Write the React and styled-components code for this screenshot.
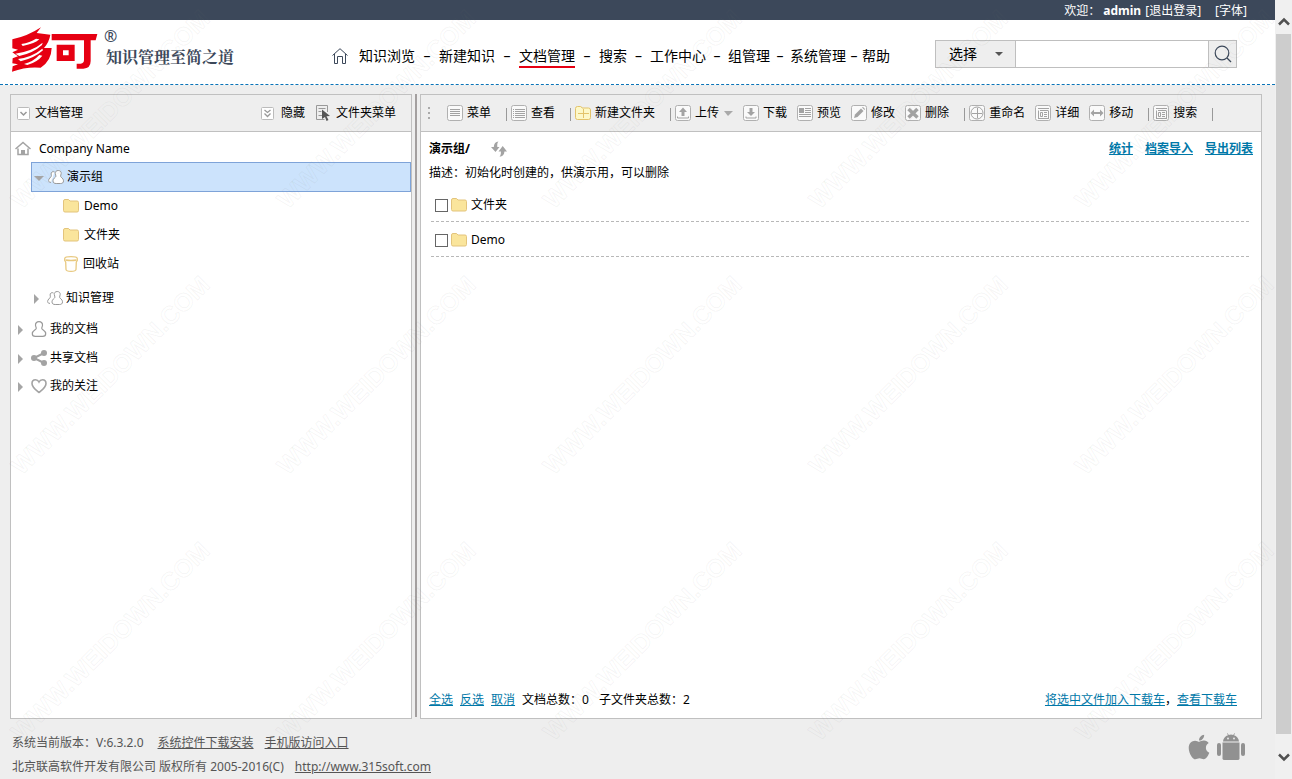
import React from "react";
import styled, { createGlobalStyle, css } from "styled-components";
import { FaApple } from "react-icons/fa";

const GlobalStyle = createGlobalStyle`
  *, *::before, *::after { box-sizing: border-box; }
  body {
    margin: 0;
    background: #eee;
    color: #000;
    font-family: "Noto Sans", "Noto Sans CJK SC", sans-serif;
    font-size: 12px;
    line-height: 20px;
  }
  button, input, select { font: inherit; color: inherit; }
`;

const Page = styled.div`
  position: relative;
  display: flex;
  min-height: 100vh;
`;

const Main = styled.div`
  flex: 1;
  min-width: 0;
  display: flex;
  flex-direction: column;
`;

const TopBar = styled.div`
  display: flex;
  justify-content: flex-end;
  height: 20px;
  padding-right: 28px;
  background: #3c485a;
  color: #fff;
  line-height: 22px;
  white-space: pre;
`;

const TopLink = styled.a`
  color: #fff;
  text-decoration: none;
  margin-left: ${(p) => (p.$gap ? 14 : 4)}px;
`;

const Header = styled.header`
  display: flex;
  align-items: flex-start;
  height: 65px;
  padding-left: 12px;
  padding-right: 38px;
  background: #fff;
  border-bottom: 1px dashed #0a74b8;
`;

const Brand = styled.div`
  display: flex;
  flex: 0 0 320px;
  padding-top: 7px;
  color: #3c485a;
`;

const Registered = styled.span`
  margin-left: 5px;
  width: 12px;
  font-size: 16px;
  line-height: 18px;
`;

const Slogan = styled.span`
  margin-left: -10px;
  padding-top: 20px;
  font-family: "Noto Serif CJK SC", "Noto Sans CJK SC", serif;
  font-size: 16px;
  font-weight: 700;
  white-space: nowrap;
`;

const Nav = styled.nav`
  display: flex;
  align-items: center;
  height: 32px;
  margin-top: 20px;
  font-size: 14px;
  white-space: nowrap;
`;

const NavHome = styled.a`
  display: flex;
  margin-right: 11px;
`;

const NavLink = styled.a`
  color: #000;
  text-decoration: none;
  line-height: 20px;
  padding-top: 1px;
  border-bottom: 2px solid ${(p) => (p.$active ? "#e60012" : "transparent")};
`;

const NavDash = styled.span`
  width: ${(p) => p.$width}px;
  text-align: center;
`;

const Search = styled.form`
  display: flex;
  width: 302px;
  height: 28px;
  margin: 20px 0 0 auto;
  border: 1px solid #bfbfbf;
  background: #eee;
`;

const SelectWrap = styled.div`
  display: flex;
  align-items: center;
  width: 80px;
  padding-right: 12px;
  border-right: 1px solid #bfbfbf;
`;

const SearchSelect = styled.select`
  appearance: none;
  flex: 1;
  min-width: 0;
  padding: 0 0 0 13px;
  border: 0;
  background: transparent;
  font-size: 14px;
`;

const SearchInput = styled.input`
  flex: 1;
  min-width: 0;
  border: 0;
  border-right: 1px solid #bfbfbf;
  background: #fff;
`;

const SearchButton = styled.button`
  display: flex;
  align-items: center;
  justify-content: center;
  width: 27px;
  padding: 0;
  border: 0;
  background: transparent;
`;

const Workspace = styled.div`
  flex: 1;
  display: flex;
  padding: 9px 13px 0 10px;
`;

const Panel = styled.section`
  display: flex;
  flex-direction: column;
  border: 1px solid #c0c0c0;
  background: #fff;
  ${(p) => (p.$side ? css`flex: 0 0 402px;` : css`flex: 1; min-width: 0;`)}
`;

const Splitter = styled.div`
  width: 2px;
  margin: 0 3px 2px;
  background: #a39f9f;
`;

const PanelBar = styled.div`
  display: flex;
  align-items: center;
  height: 37px;
  padding: 0 15px 0 ${(p) => (p.$tools ? 7 : 6)}px;
  border-bottom: 1px solid #c0c0c0;
  background: #eee;
  white-space: nowrap;
`;

const BarButton = styled.button`
  display: flex;
  align-items: center;
  gap: ${(p) => p.$gap || 4}px;
  margin: 0 ${(p) => p.$after || 0}px 0 0;
  padding: 0;
  border: 0;
  background: transparent;
  line-height: 18px;
`;

const BarText = styled.span``;

const BarSpacer = styled.div`
  flex: 1;
`;

const BarDivider = styled.span`
  width: 1px;
  height: 13px;
  margin: 2px 4px 0 5px;
  background: #999;
`;

const Grip = styled.span`
  width: 2px;
  height: 12px;
  margin-right: 17px;
  background: repeating-linear-gradient(#aaa 0 2px, transparent 2px 5px);
`;

const Caret = styled.span`
  width: 0;
  height: 0;
  margin: 0 10px 0 5px;
  border: 5px solid transparent;
  border-top-color: #a9a9a9;
  border-bottom: 0;
  border-left-width: 4px;
`;

const SelectCaret = styled.span`
  border: 4px solid transparent;
  border-top-color: #555;
  border-bottom: 0;
`;

const Tree = styled.ul`
  margin: 0;
  padding: 3px 0 0;
  list-style: none;
`;

const TreeRow = styled.li`
  display: flex;
  align-items: center;
  height: ${(p) => p.$height}px;
  margin-top: ${(p) => p.$before || 0}px;
  margin-left: ${(p) => p.$indent}px;
  ${(p) =>
    p.$selected &&
    css`
      border: 1px solid #7ea3d8;
      background: #cce3fc;
    `}
`;

const TreeLabel = styled.a`
  display: flex;
  align-items: center;
  gap: ${(p) => p.$gap}px;
  color: #000;
  text-decoration: none;
`;

const Toggle = styled.span`
  flex: none;
  border: 5px solid transparent;
  ${(p) =>
    p.$open
      ? css`
          margin: 2px 4px 0 2px;
          border-top-color: #a5a5a5;
          border-bottom: 0;
        `
      : css`
          margin: 2px 8px 0 0;
          border-left-color: #a5a5a5;
          border-right: 0;
        `}
`;

const TitleRow = styled.div`
  display: flex;
  align-items: center;
  height: 33px;
  padding: 0 8px;
  font-weight: 700;
`;

const Title = styled.h1`
  margin: 0 21px 0 0;
  font-size: 12px;
`;

const IconButton = styled.button`
  display: flex;
  padding: 0;
  border: 0;
  background: transparent;
`;

const LinkGroup = styled.div`
  display: flex;
  gap: ${(p) => p.$gap}px;
  margin-left: auto;
`;

const TextLink = styled.a`
  color: #0078a8;
  text-decoration: underline;
`;

const Description = styled.p`
  margin: 0;
  padding: 0 8px;
  line-height: 16px;
`;

const FileList = styled.ul`
  margin: 6px 12px 0 10px;
  padding: 0;
  list-style: none;
`;

const FileRow = styled.li`
  display: flex;
  align-items: center;
  height: 35px;
  padding: 2px 0 0 4px;
  border-bottom: 1px dashed #b8b8b8;
`;

const FileCheck = styled.input`
  appearance: none;
  width: 13px;
  height: 13px;
  margin: 0 3px 0 0;
  border: 1px solid #666;
  background: #fff;
`;

const FileLabel = styled.label`
  display: flex;
  align-items: center;
  gap: 4px;
`;

const ListFooter = styled.div`
  display: flex;
  align-items: center;
  gap: 7px;
  margin-top: auto;
  padding: 0 24px 8px 8px;
`;

const Count = styled.span`
  margin-right: 3px;
`;

const Footer = styled.footer`
  display: flex;
  align-items: flex-start;
  justify-content: space-between;
  height: 60px;
  padding: 12px 30px 0 12px;
  line-height: 24px;
  color: #555;
`;

const FooterLine = styled.div`
  display: flex;
  gap: 11px;
`;

const FooterLink = styled.a`
  color: #555;
  text-decoration: underline;
  margin-left: ${(p) => p.$lead || 0}px;
`;

const Stores = styled.div`
  display: flex;
  gap: 4px;
  align-items: center;
  padding-top: 2px;
  color: #919191;
`;

const ScrollTrack = styled.div`
  position: relative;
  display: flex;
  flex-direction: column;
  align-items: center;
  width: 17px;
  padding: 16px 0;
  background: #f0f0f0;
`;

const ScrollThumb = styled.div`
  flex: 1;
  width: 15px;
  margin: 6px 0 17px;
  background: #cdcdcd;
`;

const Watermark = styled.div`
  position: absolute;
  inset: 0;
  overflow: hidden;
  pointer-events: none;
`;

const WatermarkGrid = styled.div`
  display: grid;
  grid-template-columns: repeat(auto-fill, 266px);
  grid-auto-rows: 266px;
  margin: -24px -140px 0 -23px;
`;

const WatermarkCell = styled.span`
  display: flex;
  align-items: center;
  justify-content: center;
  font: 700 25px/30px "Liberation Sans", sans-serif;
  color: rgba(128, 128, 128, 0.02);
  -webkit-text-stroke: 1px rgba(120, 120, 120, 0.07);
  transform: rotate(-45deg);
`;

const Svg = ({ w = 16, h = 16, children, ...rest }) => (
  <svg width={w} height={h} viewBox={`0 0 ${w} ${h}`} fill="none" aria-hidden="true" {...rest}>
    {children}
  </svg>
);

const Framed = ({ children }) => (
  <Svg>
    <rect x=".5" y=".5" width="15" height="15" rx="2" fill="#fafafa" stroke="#b0b0b0" />
    {children}
  </Svg>
);

const G = "#a3a3a3";

const icons = {
  menu: (
    <Framed>
      <path d="M3 4.500h10M3 6.500h10M3 8.500h10M3 10.500h10" stroke={G} />
    </Framed>
  ),
  view: (
    <Framed>
      <path d="M2 4.500h1M4 4.500h10M2 6.500h1M4 6.500h10M2 8.500h1M4 8.500h10M2 10.500h1M4 10.500h10M2 12.500h1M4 12.500h10" stroke={G} />
    </Framed>
  ),
  newFolder: (
    <Svg>
      <path d="M.5 3.500q0-2 2-2h3q1 0 1.500 1.500h6.500q2 0 2 2v7.500q0 2-2 2h-11q-2 0-2-2z" fill="#fdf8c8" stroke="#e3c36b" />
      <path d="M8.500 4v9M3 8.500h11" stroke="#e3c36b" />
    </Svg>
  ),
  upload: (
    <Framed>
      <path d="M8 2.500l4 4.500H9.500v4h-3V7H4z" fill={G} />
      <path d="M2.500 11.500v1.500h11v-1.500" stroke={G} />
    </Framed>
  ),
  download: (
    <Framed>
      <path d="M6.500 3h3v4H12l-4 4-4-4h2.500z" fill={G} />
      <path d="M3 11.500v1.500h10v-1.500" stroke={G} />
    </Framed>
  ),
  preview: (
    <Framed>
      <path d="M2 3h5v5H2z" fill={G} />
      <path d="M8 3.500h6M8 5.500h6M8 7.500h6M2 9.500h12M2 11.500h12" stroke={G} />
    </Framed>
  ),
  edit: (
    <Framed>
      <path d="M3 13l1-3.500L10 3.500l2.500 2.500-6 6z" fill={G} />
      <path d="M11 2.500l1-.5 2 2-.5 1z" fill={G} />
    </Framed>
  ),
  remove: (
    <Framed>
      <path d="M3.500 4l9 8.500M12.500 4l-9 8.500" stroke={G} strokeWidth="3.500" />
    </Framed>
  ),
  rename: (
    <Framed>
      <circle cx="8" cy="8" r="6" stroke={G} />
      <path d="M8.500 3v10M3 8.500h10" stroke={G} />
    </Framed>
  ),
  detail: (
    <Framed>
      <path d="M3 3.500h11M3.500 5.500v8M13.500 5.500v8M3 13.500h11M5 5.500h8M5.500 7.500h2v4h-2zM9 7.500h3M9 9.500h3M9 11.500h3" stroke={G} />
    </Framed>
  ),
  move: (
    <Framed>
      <path d="M1.500 8L5 4.500V7h6V4.500L14.500 8 11 11.500V9H5v2.500z" fill={G} />
    </Framed>
  ),
  collapse: (
    <Svg w={13} h={13}>
      <rect x=".5" y=".5" width="12" height="12" rx="1" fill="#fff" stroke="#bbb" />
      <path d="M3.500 5l3 3 3-3" stroke="#999" strokeWidth="1.500" />
    </Svg>
  ),
  hide: (
    <Svg w={13} h={13}>
      <rect x=".5" y=".5" width="12" height="12" rx="1" fill="#fff" stroke="#bbb" />
      <path d="M3.500 3l3 2.500 3-2.500M3.500 6.500l3 3 3-3" stroke="#999" strokeWidth="1.300" />
    </Svg>
  ),
  folderMenu: (
    <Svg w={14} h={16}>
      <path d="M11.500 7V.5H.5v14h8M2.500 3.500h7M2.500 6.500h3M2.500 10.500h4" stroke="#999" />
      <path d="M6 4.500l8 6.500-3.500.3 2 3.700-2 1-1.500-4L6 14z" fill="#555" />
    </Svg>
  ),
  house: (
    <Svg>
      <path d="M.5 8L8 1.500 15.500 8M3 7.500V13.500h10V7.500" stroke={G} strokeWidth="1.500" />
      <path d="M6 9h4v4H6z" fill={G} />
    </Svg>
  ),
  people: (
    <Svg>
      <path d="M6.500 3c-1.700-1-3.600.2-3.400 2 .1 1 .5 1.500.2 2.200C2.900 8.300.6 9.500.6 11.500c0 1.200.8 1.900 2.400 1.900" fill="#fff" stroke="#999" />
      <path d="M10.200 1.500c-2 0-3.100 1.400-2.900 3 .1 1.300.8 1.900.6 2.800C7.600 8.700 5 9.200 5 11.800c0 2 1.200 2.700 3.200 2.700h4.200c2 0 3.100-.7 3.100-2.700 0-2.600-2.600-3.100-2.900-4.500-.2-.9.500-1.500.6-2.800.2-1.600-1-3-3-3z" fill="#fff" stroke="#999" />
    </Svg>
  ),
  person: (
    <Svg>
      <path d="M8 .7c-2.400 0-3.700 1.600-3.500 3.500.1 1.400.9 2.300.7 3.300-.3 1.500-3.900 2-3.900 5.200 0 2 1.200 2.600 3 2.600h7.400c1.800 0 3-.6 3-2.600 0-3.200-3.600-3.700-3.900-5.200-.2-1 .6-1.900.7-3.300C11.700 2.300 10.400.7 8 .7z" stroke="#999" strokeWidth="1.200" />
    </Svg>
  ),
  share: (
    <Svg>
      <path d="M13 3L3 8l10 5" stroke={G} strokeWidth="2" />
      <circle cx="13" cy="3" r="3" fill={G} />
      <circle cx="3" cy="8" r="3" fill={G} />
      <circle cx="13" cy="13" r="3" fill={G} />
    </Svg>
  ),
  heart: (
    <Svg>
      <path d="M8 14.500C5 12 1 9.500 1 5.500 1 3.300 2.600 1.800 4.500 1.800c1.500 0 2.800.8 3.500 2.200.7-1.400 2-2.200 3.500-2.200C13.400 1.800 15 3.300 15 5.500c0 4-4 6.500-7 9z" stroke={G} strokeWidth="1.600" />
    </Svg>
  ),
  folder: (
    <Svg>
      <path d="M.5 3q0-1.500 1.500-1.500h3.500L7 3h7q1.500 0 1.500 1.500v8q0 1.500-1.500 1.500H2q-1.500 0-1.500-1.500z" fill="#fae59c" stroke="#e3c47c" />
    </Svg>
  ),
  bin: (
    <Svg w={14}>
      <path d="M.7 2.500v2l1 1.500.3 7.500q.2 1.800 5 1.800t5-1.800l.3-7.500 1-1.500v-2Q13 .7 7 .7T.7 2.500z" fill="#fff" stroke="#e8c980" strokeWidth="1.300" />
      <path d="M1.500 4q5.500 1 11 0" stroke="#e8c980" strokeWidth="1.300" />
    </Svg>
  ),
  refresh: (
    <Svg>
      <path d="M7.500.5C4.500.8 3 2.500 2.800 6H0l4.500 5L8.500 6H6.300C6.200 3.500 6.200 1.800 7.500.5zM8.500 15.800c3-.3 4.800-2 4.900-5.300H16l-4.300-5.500L7.500 10.500h2.400c.1 2.500-.2 4-1.400 5.300z" fill={G} />
    </Svg>
  ),
};

const Logo = () => (
  <svg width="87" height="45" viewBox="12 8 261 135" fill="#e60012" role="img" aria-label="Logo">
    <path d="M13 45Q58 36 99 9L86 26L127 31Q124 52 108 71H131Q130 110 98 130Q55 126 12 142L14 126L30 120L13 117L14 102L30 96L13 84L30 76L13 72V60Z" />
    <path d="M40 59Q66 55 84 43L94 45Q82 57 44 65ZM22 88Q74 80 104 55L102 62Q76 86 34 95ZM30 104Q72 98 103 73L105 78Q80 101 38 111ZM48 119Q76 112 94 92L103 94Q88 113 58 122Z" fill="#fff" />
    <path d="M131 29H268L263 48H248V110Q248 132 226 133H206V118H218Q228 117 228 107V48H131Z" />
    <path fillRule="evenodd" d="M146 61H200V110H146ZM165 78V93H182V78Z" />
  </svg>
);

const Android = () => (
  <Svg w={28} h={28} fill="currentColor">
    <path d="M6 8.500C6.200 5 8.500 3 11 2.200L10 .5l.6-.3 1.200 1.700q2.200-.6 4.400 0L17.400.2l.6.3-1 1.700c2.500.8 4.800 2.800 5 6.300z" />
    <path d="M5.500 9.500h17v16q0 1.500-2 1.500h-13q-2 0-2-1.500z" />
    <rect x="0" y="10" width="4" height="13" rx="2" />
    <rect x="24" y="10" width="4" height="13" rx="2" />
    <circle cx="11" cy="5.500" r=".9" fill="#eee" />
    <circle cx="17" cy="5.500" r=".9" fill="#eee" />
  </Svg>
);

const navItems = [
  ["知识浏览", 24],
  ["新建知识", 24],
  ["文档管理", 24],
  ["搜索", 23],
  ["工作中心", 22],
  ["组管理", 20],
  ["系统管理", 16],
  ["帮助", 0],
];

const tools = [
  ["menu", "菜单", true],
  ["view", "查看", true],
  ["newFolder", "新建文件夹", true],
  ["upload", "上传"],
  ["download", "下载"],
  ["preview", "预览"],
  ["edit", "修改"],
  ["remove", "删除", true],
  ["rename", "重命名"],
  ["detail", "详细"],
  ["move", "移动", true],
  ["detail", "搜索", true],
];

const treeItems = [
  { icon: "house", text: "Company Name", indent: 4, gap: 8, height: 27 },
  { icon: "people", text: "演示组", indent: 20, gap: 3, height: 30, selected: true, toggle: "open" },
  { icon: "folder", text: "Demo", indent: 52, gap: 5, height: 28 },
  { icon: "folder", text: "文件夹", indent: 52, gap: 5, height: 29 },
  { icon: "bin", text: "回收站", indent: 53, gap: 5, height: 29 },
  { icon: "people", text: "知识管理", indent: 23, gap: 3, height: 29, before: 5, toggle: "closed" },
  { icon: "person", text: "我的文档", indent: 7, gap: 3, height: 29, before: 2, toggle: "closed" },
  { icon: "share", text: "共享文档", indent: 7, gap: 3, height: 29, toggle: "closed" },
  { icon: "heart", text: "我的关注", indent: 7, gap: 3, height: 28, toggle: "closed" },
];

export default function App() {
  return (
    <>
      <GlobalStyle />
      <Page>
        <Main>
          <TopBar>
            <span>欢迎： </span>
            <strong>admin</strong>
            <TopLink href="#">[退出登录]</TopLink>
            <TopLink href="#" $gap>[字体]</TopLink>
          </TopBar>

          <Header>
            <Brand>
              <Logo />
              <Registered>®</Registered>
              <Slogan>知识管理至简之道</Slogan>
            </Brand>
            <Nav>
              <NavHome href="#" aria-label="首页">
                <Svg>
                  <path d="M.5 7.500L8 .7l7.500 6.800M2.500 6v9.500h3V8.500h5v7h3V6" stroke="#3c485a" />
                </Svg>
              </NavHome>
              {navItems.map(([text, gap]) => (
                <React.Fragment key={text}>
                  <NavLink href="#" $active={text === "文档管理"}>{text}</NavLink>
                  {gap > 0 && <NavDash $width={gap}>–</NavDash>}
                </React.Fragment>
              ))}
            </Nav>
            <Search onSubmit={(e) => e.preventDefault()}>
              <SelectWrap>
                <SearchSelect aria-label="选择">
                  <option>选择</option>
                </SearchSelect>
                <SelectCaret />
              </SelectWrap>
              <SearchInput type="text" aria-label="搜索" />
              <SearchButton type="submit" aria-label="搜索">
                <Svg w={18} h={18}>
                  <circle cx="8" cy="8" r="6.800" stroke="#3c485a" strokeWidth="1.200" />
                  <path d="M13 13l4 4" stroke="#3c485a" strokeWidth="1.200" />
                </Svg>
              </SearchButton>
            </Search>
          </Header>

          <Workspace>
            <Panel $side>
              <PanelBar>
                <BarButton $gap={5}>
                  {icons.collapse}
                  <BarText>文档管理</BarText>
                </BarButton>
                <BarSpacer />
                <BarButton $gap={7} $after={11}>
                  {icons.hide}
                  <BarText>隐藏</BarText>
                </BarButton>
                <BarButton $gap={6}>
                  {icons.folderMenu}
                  <BarText>文件夹菜单</BarText>
                </BarButton>
              </PanelBar>
              <Tree>
                {treeItems.map((t) => (
                  <TreeRow
                    key={t.text}
                    $height={t.height}
                    $indent={t.indent}
                    $before={t.before}
                    $selected={t.selected}
                  >
                    {t.toggle && <Toggle $open={t.toggle === "open"} />}
                    <TreeLabel href="#" $gap={t.gap}>
                      {icons[t.icon]}
                      <span>{t.text}</span>
                    </TreeLabel>
                  </TreeRow>
                ))}
              </Tree>
            </Panel>

            <Splitter />

            <Panel>
              <PanelBar $tools>
                <Grip />
                {tools.map(([icon, text, divided]) => (
                  <React.Fragment key={text}>
                    <BarButton $after={icon === "upload" ? 0 : 10}>
                      {icons[icon]}
                      <BarText>{text}</BarText>
                    </BarButton>
                    {icon === "upload" && <Caret />}
                    {divided && <BarDivider />}
                  </React.Fragment>
                ))}
              </PanelBar>
              <TitleRow>
                <Title>演示组/</Title>
                <IconButton aria-label="刷新">{icons.refresh}</IconButton>
                <LinkGroup $gap={12}>
                  <TextLink href="#">统计</TextLink>
                  <TextLink href="#">档案导入</TextLink>
                  <TextLink href="#">导出列表</TextLink>
                </LinkGroup>
              </TitleRow>
              <Description>描述：初始化时创建的，供演示用，可以删除</Description>
              <FileList>
                {["文件夹", "Demo"].map((name, i) => (
                  <FileRow key={name}>
                    <FileCheck type="checkbox" id={`file-${i}`} />
                    <FileLabel htmlFor={`file-${i}`}>
                      {icons.folder}
                      {name}
                    </FileLabel>
                  </FileRow>
                ))}
              </FileList>
              <ListFooter>
                <TextLink href="#">全选</TextLink>
                <TextLink href="#">反选</TextLink>
                <TextLink href="#">取消</TextLink>
                <Count>文档总数：0</Count>
                <Count>子文件夹总数：2</Count>
                <LinkGroup $gap={0}>
                  <TextLink href="#">将选中文件加入下载车</TextLink>
                  <span>，</span>
                  <TextLink href="#">查看下载车</TextLink>
                </LinkGroup>
              </ListFooter>
            </Panel>
          </Workspace>

          <Footer>
            <div>
              <FooterLine>
                <span>系统当前版本：V:6.3.2.0</span>
                <FooterLink href="#" $lead={3}>系统控件下载安装</FooterLink>
                <FooterLink href="#">手机版访问入口</FooterLink>
              </FooterLine>
              <FooterLine>
                <span>北京联高软件开发有限公司 版权所有 2005-2016(C)</span>
                <FooterLink href="#">http://www.315soft.com</FooterLink>
              </FooterLine>
            </div>
            <Stores>
              <FaApple size={28} aria-hidden="true" />
              <Android />
            </Stores>
          </Footer>
        </Main>

        <Watermark aria-hidden="true">
          <WatermarkGrid>
            {Array.from({ length: 15 }, (_, i) => (
              <WatermarkCell key={i}>WWW.WEIDOWN.COM</WatermarkCell>
            ))}
          </WatermarkGrid>
        </Watermark>

        <ScrollTrack aria-hidden="true">
          <Svg w={12} h={12}>
            <path d="M1 8.500l5-5 5 5" stroke="#505050" strokeWidth="2.500" />
          </Svg>
          <ScrollThumb />
          <Svg w={12} h={12}>
            <path d="M1 3.500l5 5 5-5" stroke="#505050" strokeWidth="2.500" />
          </Svg>
        </ScrollTrack>
      </Page>
    </>
  );
}
